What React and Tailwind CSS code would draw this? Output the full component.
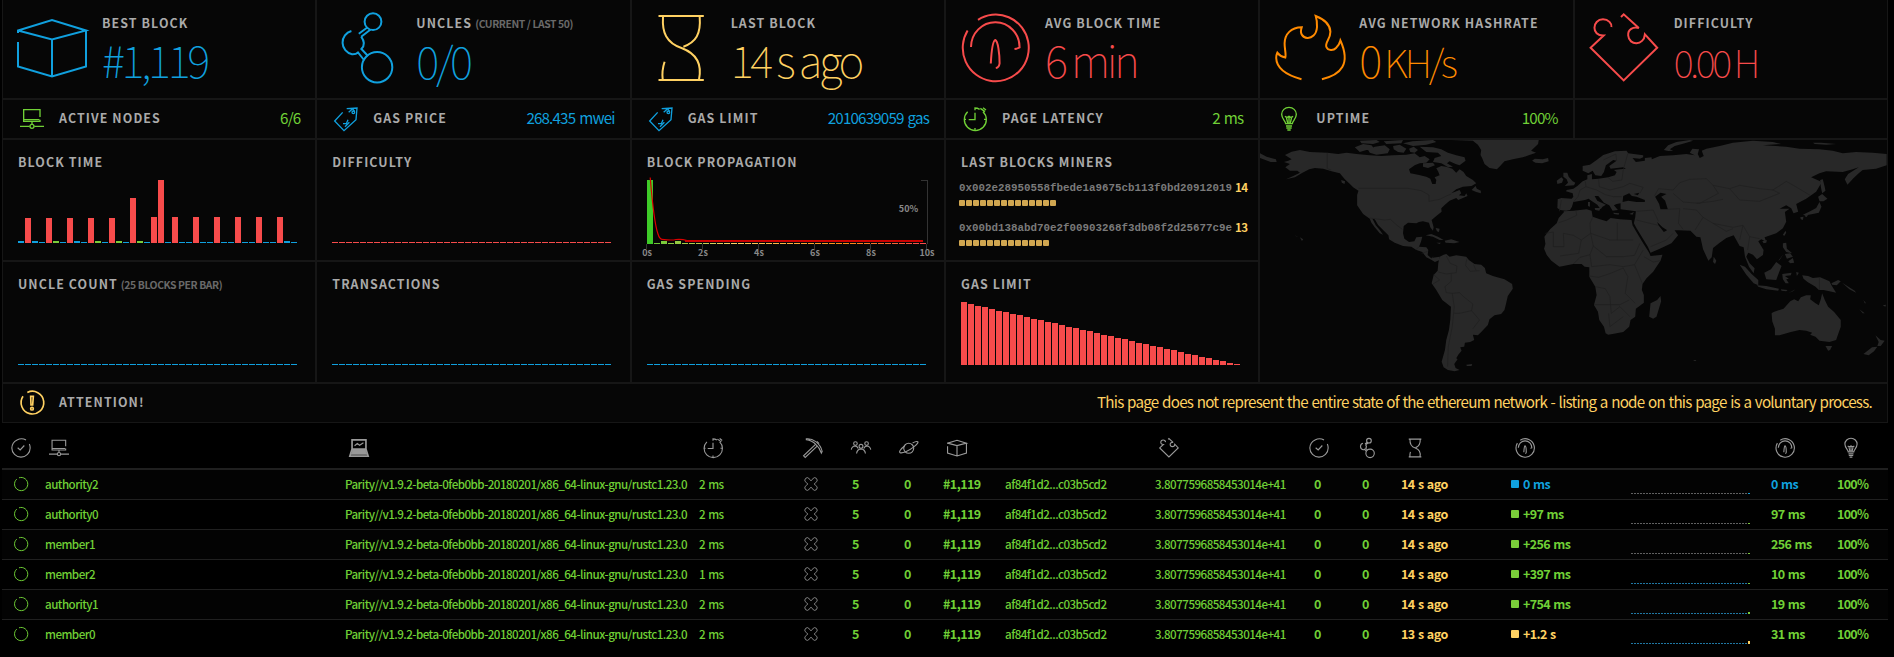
import React from "react";

const BLUE = "#10a0de";
const GREEN = "#7bcc3a";
const YELLOW = "#ffd162";
const RED = "#f74b4b";

/* ---------- large icons, drawn on a 72 x 72 board ---------- */

const SHAPES = {
  cube: <path d="M2 21V18.5L36 8L70 18.5L36 27.5L2 18.5M2 30V54.5L36 64.5L70 54.5V18.5M36 27.5V64.5" />,
  uncles: (
    <g>
      <circle cx="43" cy="9.7" r="8.4" />
      <path d="M21.4 19A12 12 0 0 0 22 42.3Q26 42.5 28 40.5L34 48M31.2 24.7Q36.5 32 31.4 37L38 44M37.3 15.5L28.8 21.7M40.6 17.5L31.2 24.7" />
      <circle cx="47.1" cy="55.3" r="15.2" />
    </g>
  ),
  hourglass: (
    <path d="M13.5 4H58.8M13.5 68H58.8M18 5C17 20 21 31 37.1 36.3C52 42 57 53 54 67.5M54.7 5C56 22 51 30 38.4 34.7M19.6 49.7C17.5 56 17 62 17.7 67.5" />
  ),
  gauge: (
    <g>
      <path d="M19 7.8A33 33.3 0 1 1 8.6 18.5" />
      <path d="M12 35A24.3 25 0 0 1 60.6 35.5Q59 36.5 55.5 37" />
      <path d="M31.8 51.5C32.3 42 33.5 29 36.3 28C39 29 40.6 42 40.6 51.3Q40 55.5 36.8 56" />
    </g>
  ),
  flame: (
    <path d="M28.5 67.2C13 63 3.5 56 3.2 46Q3.2 43 4.3 40.7Q7 44.5 12.3 45.6C13.3 42 11.5 37 11.6 31.3C11.8 22 18 15.5 28.7 15.3C24 28 43 31 44 15Q44.3 9 42.7 4C49 6.5 57 11 57.4 19.7C57.5 27 51.5 31 53.4 35C55 39 60.5 38.8 63 36Q66.3 33 67.4 28.5C78 52 68 63 48.9 67.2" />
  ),
  puzzle: (
    <path d="M33 5L35.7 2.3L50.8 16C45 14.5 39.7 17.5 40.2 23.5C41 34 56 34 56.9 22.3L69.2 35.7L35.7 68.4L2.6 35.7L15.6 23.5C3 24 4 7.5 15 7.3C20.5 7.3 24 11.5 23.4 15" />
  ),
  check: (
    <g>
      <path d="M54 7.5C35 -4 4 8 3 36A33 33 0 1 0 69 36Q69 28 66 22" />
      <path d="M24 35L33 43L48 27" />
    </g>
  ),
  ring: <path d="M26 4A34 34 0 1 1 14 11" />,
  nodes: (
    <g>
      <path d="M60 30V8H11V38M58 38H11V43H60V38M0 58H29M43 58H72M36 44V51" />
      <circle cx="36" cy="58" r="6" />
    </g>
  ),
  laptop: (
    <g>
      <path d="M11 7H61V40H11ZM11 40L3 65H69L61 40" strokeWidth="6" />
      <path d="M14 42H58L63 58H9Z" fill="currentColor" />
      <path d="M20 28L30 20L38 26L52 17" />
    </g>
  ),
  clock: (
    <g>
      <path d="M14 14A33 33 0 1 0 60 14M34 3Q44 3 50 7M36 3V10M52 4L66 14M60 2L69 9" />
      <path d="M36 17V38H17M3 37H9M63 37H69M36 63V70" />
    </g>
  ),
  pick: (
    <g>
      <path d="M12 3C34 0 62 18 69 48L66 54C60 38 52 28 46 23C38 15 26 8 12 6Z" />
      <path d="M46 22L2 64L8 70L52 28M50 12L58 20" />
    </g>
  ),
  peers: (
    <g>
      <circle cx="16" cy="20" r="6.5" />
      <circle cx="56" cy="20" r="6.5" />
      <circle cx="36" cy="30" r="7" />
      <path d="M1 42Q3 30 15 29Q23 30 26 38M71 42Q69 30 57 29Q49 30 46 38M20 56Q22 40 36 39Q50 40 52 56" />
    </g>
  ),
  planet: (
    <g>
      <circle cx="35" cy="37" r="18" />
      <path d="M20 29C8 38 -2 50 4 53C12 56 34 48 52 33C66 22 72 14 66 13C62 12 56 14 49 18" />
    </g>
  ),
  bulb: (
    <g>
      <path d="M26 50C26 42 14 36 14 22A22 21 0 0 1 58 22C58 36 46 42 46 50ZM27 57H45M28 63H44M31 69H41" />
      <path d="M24 28Q30 34 36 28Q42 34 48 28M28 30L32 48M44 30L40 48M36 30V48" />
    </g>
  ),
  tag: (
    <g>
      <path d="M26 16L2 42L30 71L66 38L69 3L38 5M44 16L56 5L62 14" />
      <circle cx="58" cy="16" r="4" />
      <path d="M27 50H37L42 38M33 59L46 46" />
    </g>
  ),
  alert: (
    <g>
      <path d="M22 4.5A34 34 0 1 1 9 16" />
      <path d="M32 16H40L38 42H33Z" />
      <circle cx="36" cy="53" r="4" />
    </g>
  ),
  cross: (
    <path d="M18 3Q24 4 27 11L36 19L45 11Q48 4 54 3Q66 4 68 16Q68 24 60 28L53 36L60 44Q68 48 68 56Q66 68 54 69Q48 68 45 61L36 53L27 61Q24 68 18 69Q6 68 4 56Q4 48 12 44L19 36L12 28Q4 24 4 16Q6 4 18 3Z" />
  ),
};

function Icon({ name, className, stroke = 2 }) {
  return (
    <svg viewBox="0 0 72 72" className={className} fill="none" stroke="currentColor" strokeWidth={stroke} overflow="visible">
      {SHAPES[name]}
    </svg>
  );
}

/* ---------- panels ---------- */

const CELL = "box-border border border-[#161616] bg-[#060606] min-w-0";
const LABEL = "text-[12.4px] leading-4 font-bold tracking-[1.1px] text-[#aaa] whitespace-nowrap";

function Note({ children }) {
  return <span className="ml-[3px] text-[10.4px] font-bold tracking-[-0.42px] text-[#696969]">{children}</span>;
}

function BigStat({ icon, label, note, color, children }) {
  return (
    <div className={`${CELL} border-t-0 flex pl-[13px] pt-3 ${color}`}>
      <Icon name={icon} className="size-[72px] shrink-0" />
      <div className="ml-[14px] mt-[3px] whitespace-nowrap">
        <div className={LABEL}>
          {label}
          {note && <Note>{note}</Note>}
        </div>
        <div className="mt-[3px] text-[44px] leading-[50px] font-thin tracking-[-3.3px]">{children}</div>
      </div>
    </div>
  );
}

function SmallStat({ icon, label, value, color }) {
  return (
    <div className={`${CELL} flex items-center pl-[17px] pr-[14px] ${color}`}>
      <Icon name={icon} className="size-6 shrink-0" stroke={4} />
      <div className={`${LABEL} ml-[15px] pb-0.5`}>{label}</div>
      <div className="ml-auto pb-[5px] pr-px text-[15.2px] leading-5 font-normal tracking-[-0.85px] [word-spacing:1.5px] whitespace-nowrap">{value}</div>
    </div>
  );
}

function Panel({ title, note, children }) {
  return (
    <div className={`${CELL} flex flex-col px-[15px] pt-[14px] pb-[17px]`}>
      <div className={LABEL}>
        {title}
        {note && <Note>{note}</Note>}
      </div>
      {children}
    </div>
  );
}

function Bars({ data }) {
  return (
    <div className="mt-auto flex items-end gap-px">
      {data.map(([h, c], i) => (
        <div key={i} className="w-1.5 shrink-0" style={{ height: h, background: c }} />
      ))}
    </div>
  );
}

const fill = (n, h, c) => Array.from({ length: n }, () => [h, c]);
const B1 = [1, BLUE], B2 = [2, BLUE], G2 = [2, GREEN], R25 = [25, RED], R26 = [26, RED];

const BLOCK_TIME = [
  B2, R25, B2, B1, R25, G2, B1, R25, B2, B1, R25, G2, B1, R25, G2, B1, [45, RED], G2, B1, R26,
  [63, RED], B1, R26, B1, B1, R26, B1, B1, R26, B1, B1, R26, B1, B1, R26, B1, B1, R26, B2, B1,
];

const GAS_LIMIT = [
  63, 61, 59, 58, 56, 54, 53, 51, 50, 48, 46, 45, 43, 42, 40, 38, 37, 35, 34, 32,
  30, 29, 27, 26, 24, 22, 21, 19, 18, 16, 15, 13, 11, 10, 8, 7, 5, 4, 2, 1,
].map((h) => [h, RED]);

function mix(a, b, t) {
  return `rgb(${a.map((v, i) => Math.round(v + (b[i] - v) * t)).join(",")})`;
}

function propagationColor(i) {
  const g = [96, 200, 50], y = [255, 209, 98], o = [255, 138, 20], r = [247, 75, 75];
  if (i < 12) return mix(g, y, i / 12);
  if (i < 28) return mix(y, o, (i - 12) / 16);
  return mix(o, r, (i - 28) / 11);
}

function Propagation() {
  return (
    <svg width="296" height="88" viewBox="0 0 296 88" className="mt-[3px] shrink-0 overflow-visible" shapeRendering="auto">
      <g fill="none" stroke="#333" shapeRendering="crispEdges">
        {[0, 56, 112, 168, 224, 280].map((x) => (
          <path key={x} d={`M${x - 0.5} 71V76`} />
        ))}
        <path d="M274 7.5H280.5V71" />
      </g>
      {Array.from({ length: 40 }, (_, i) => {
        const h = i === 0 ? 64 : i === 2 || i === 4 ? 3 : 1;
        return <rect key={i} x={i * 7} y={71 - h} width="6" height={h} fill={i === 0 ? "#3ecb28" : propagationColor(i)} />;
      })}
      <path d="M3.2 4.5C4.5 20 7 50 11 61Q12.5 66 15 66.3C20 67 25 67.5 29 66.5Q35 66 40 67.5H276" fill="none" stroke="#d00" strokeWidth="1.2" />
      <path d="M38 68H276" stroke="#c00" strokeWidth="2" />
      <g fill="#888" fontSize="9" fontWeight="700" textAnchor="middle">
        {["0s", "2s", "4s", "6s", "8s", "10s"].map((t, i) => (
          <text key={t} x={i * 56} y="83">{t}</text>
        ))}
        <text x="261.500" y="38.500">50%</text>
      </g>
    </svg>
  );
}

function Miner({ hash, count }) {
  return (
    <div className="h-10">
      <div className="flex items-center h-4">
        <span className="font-['Liberation_Mono',monospace] text-[10.84px] font-bold text-[#7a7a7a]">{hash}</span>
        <span className="ml-[3px] pb-0.5 text-[11.5px] leading-4 font-bold tracking-[-0.5px] text-[#ffd162]">{count}</span>
      </div>
      <div className="mt-[4px] flex gap-px">
        {Array.from({ length: count }, (_, i) => (
          <div key={i} className="size-1.5 rounded-[1px] bg-[#d0a650]" />
        ))}
      </div>
    </div>
  );
}

/* ---------- world map: two halves of 942 units each ---------- */

function WorldMap() {
  return (
    <svg viewBox="0 0 1884 726" preserveAspectRatio="none" className="block w-full h-full">
      <g fill="#282828">
        <path d="M75 45L95 35L120 30L150 36L202 38L235 42L260 38L290 42L330 46L365 48L400 46L440 44L465 40L480 52L495 48L510 58L500 68L480 70L465 76L448 88L452 100L475 104L500 110L512 116L518 132L528 132L530 120L525 112L540 106L536 95L530 85L545 78L560 80L578 86L590 98L600 88L612 96L620 108L640 120L650 130L636 138L610 140L590 148L575 160L600 150L605 160L598 166L615 168L620 160L624 168L596 180L590 174L570 182L556 194L545 205L546 215L530 228L516 240L522 262L520 272L512 262L508 248L490 244L478 246L470 250L445 248L432 258L430 280L434 296L448 306L464 304L470 292L488 290L484 305L478 320L500 322L506 330L504 345L514 354L530 352L540 350L540 360L526 366L512 358L500 352L488 336L470 330L455 320L430 318L405 308L388 298L386 286L370 270L355 255L345 238L338 236L348 256L360 270L370 284L360 280L345 262L335 248L330 236L310 222L292 196L292 165L296 152L280 142L268 130L255 118L240 100L215 94L190 86L165 84L148 88L125 100L105 112L78 118L100 108L120 98L112 92L90 92L76 82L90 72L72 66L85 62L95 58Z" />
        <path d="M0 40L20 50L48 58L50 66L32 66L0 54ZM285 22L310 12L335 16L345 28L320 30L300 36ZM325 30L345 20L375 16L390 28L384 40L350 44L330 38ZM300 2L350 0L360 6L340 12L305 10ZM372 4L430 0L425 10L380 12ZM400 18L420 14L440 26L432 38L415 36L402 28ZM430 10L458 4L520 0L530 6L500 14L460 18ZM448 26L462 20L475 30L465 38L452 36ZM480 20L520 22L545 28L565 38L590 46L615 52L618 62L600 76L588 72L570 64L562 70L580 80L566 82L545 70L520 66L525 54L545 48L535 38L500 36ZM490 70L520 68L526 76L505 84L490 80Z" />
        <path d="M575 0L640 2L655 14L665 30L663 45L668 55L675 72L690 84L712 88L722 78L735 64L760 58L790 52L810 45L830 38L815 32L836 12L838 0ZM818 62L826 56L850 58L866 54L868 64L848 70L828 68ZM636 150L648 138L652 146L664 152L664 160L650 156ZM498 286L515 282L535 290L552 300L540 300L520 290ZM555 302L575 298L600 306L584 310L558 308ZM530 308L544 308L540 312ZM528 264L540 266L538 276L532 274ZM620 674L638 672L636 678L622 678ZM120 292L130 298L126 303ZM104 286L116 292L108 289ZM244 120L256 124L254 132L246 128Z" />
        <path d="M540 350L552 344L560 342L570 350L590 346L620 350L628 360L645 372L665 374L676 384L680 400L700 408L735 418L758 432L760 446L745 468L740 490L735 510L725 522L705 526L690 538L685 555L665 576L655 586L640 584L644 600L632 606L616 608L614 620L602 622L606 632L596 644L590 655L594 658L584 672L588 684L600 690L585 694L565 690L552 682L546 665L556 630L560 600L568 570L572 540L574 500L548 480L530 450L516 430L522 405L534 392L536 370Z" />
      </g>
      <g transform="translate(942 0)">
        <g fill="#282828">
          <path d="M-30 214L0 212L40 208L55 212L58 230L80 238L100 244L112 234L140 238L175 240L178 256L195 285L210 310L228 338L232 348L268 344L262 362L240 395L220 415L208 432L206 450L212 465L212 488L188 506L186 530L172 540L168 560L150 576L130 580L105 584L97 580L92 560L78 540L74 515L62 495L70 465L66 440L48 410L48 382L34 380L25 372L0 372L-30 378L-42 380L-66 362L-80 345L-88 326L-84 312L-87 290L-70 268L-50 250L-44 234L-28 216Z" />
          <path d="M-47 178L-36 174L-5 176L0 170L-2 160L-22 154L-20 150L0 146L12 138L28 124L42 118L42 106L56 102L56 118L75 116L105 112L125 106L130 96L122 90L140 88L158 86L150 82L112 86L108 78L130 62L120 60L98 76L92 96L84 108L66 106L58 92L45 100L28 92L28 78L50 74L70 60L90 45L125 34L160 32L165 40L210 46L210 52L200 56L178 54L188 66L215 62L215 54L235 52L236 58L260 48L300 46L340 42L365 46L350 38L358 26L378 28L374 42L380 54L392 48L386 32L400 26L440 18L480 8L540 2L600 6L625 12L570 16L640 20L680 26L740 28L780 32L810 40L850 36L900 38L942 42L942 76L910 86L870 90L858 100L842 115L824 134L816 118L826 102L858 82L840 88L810 96L760 94L740 100L715 112L742 124L745 130L730 155L700 176L670 192L676 215L662 220L655 205L640 196L620 206L650 206L636 216L640 245L630 265L610 280L575 292L580 305L565 298L556 304L572 330L570 345L552 358L540 344L526 338L520 350L530 370L545 385L542 400L528 380L516 350L512 322L500 318L482 286L460 294L440 308L420 324L416 352L406 362L390 328L382 292L370 290L352 272L300 270L285 272L268 262L252 246L256 256L272 276L298 262L315 286L295 310L260 326L232 338L224 320L190 265L182 250L186 232L188 214L160 210L142 208L142 190L130 192L122 196L134 210L118 212L108 196L92 188L75 168L64 168L72 182L98 194L88 200L82 208L72 194L54 182L46 176L35 180L0 186L-4 200L-10 210L-22 212L-40 210L-48 204Z" />
          <path d="M-30 98L-18 98L-14 110L-2 124L6 128L2 136L-26 138L-16 128L-20 118L-30 110ZM-50 122L-36 112L-30 118L-34 128L-48 132ZM44 186L50 186L50 200L44 198ZM64 204L82 204L78 212L66 210ZM120 218L138 220L136 224L122 222ZM168 222L182 216L178 224ZM272 30L285 16L310 6L350 0L360 2L335 10L305 18L290 28L300 32L285 33ZM720 8L745 8L790 12L760 14L726 12Z" />
          <path d="M742 120L750 118L756 142L758 152L748 160L744 140ZM736 170L748 162L764 176L752 184L740 184ZM740 186L746 200L738 218L720 222L700 226L690 224L712 214L730 204ZM682 232L692 230L690 240L684 238ZM694 226L706 226L700 232ZM630 284L638 272L640 278L634 288ZM568 304L582 300L580 308L572 310ZM422 350L430 362L426 372L420 366ZM630 310L640 308L642 326L658 340L640 336L630 322ZM616 362L632 342L620 360ZM636 342L652 340L660 350L642 356ZM646 364L660 354L664 368L652 370ZM500 374L516 380L536 402L556 420L556 436L542 430L520 404ZM552 436L580 438L618 446L616 452L580 448L556 440ZM574 398L594 388L610 366L626 378L618 398L610 420L580 418ZM628 402L656 398L654 406L636 408L648 416L640 418L648 430L638 430L630 418ZM670 396L678 398L672 408ZM688 406L706 408L720 414L742 412L770 424L776 436L790 458L770 454L752 450L738 450L728 440L704 426L692 416ZM624 448L644 450L640 454L626 452ZM648 458L668 448L660 454ZM776 430L796 420L804 424L792 436L778 434ZM808 428L846 452L850 458L830 448ZM872 480L880 490L876 490ZM860 508L876 520L870 520ZM930 496L940 494L938 500Z" />
          <path d="M596 520L602 516L632 506L652 484L664 478L676 484L684 472L700 466L714 466L712 478L728 490L738 496L744 478L748 460L756 480L766 500L784 516L804 540L804 560L790 600L770 606L740 602L728 590L712 584L718 578L700 572L680 570L654 576L620 586L606 586L606 566L598 544ZM758 618L778 618L772 630L766 632ZM908 586L924 600L936 602L924 618L914 618L918 606ZM872 642L898 622L914 620L904 634L888 646ZM262 468L264 484L250 530L240 536L228 530L232 490L252 480ZM360 660L370 660L366 664Z" />
        </g>
        <g fill="#060606">
          <path d="M148 186L150 168L168 160L176 168L190 170L215 180L215 186L190 186L165 182ZM182 162L198 158L194 166ZM246 170L262 158L280 162L264 170L276 182L284 208L262 208L258 192Z" />
        </g>
      </g>
      <g fill="none" stroke="#1e1e1e" strokeWidth="2">
        <path d="M202 38V86L214 90M296 145H445L485 152L508 165L508 184L540 178L560 168L575 162M330 234L375 240L392 238L412 256L428 268M536 396L560 402L575 400V424L556 440L560 458L578 460L600 458L612 470L640 492L636 512L660 540L640 566M578 460L584 500L578 560L566 620L564 680M584 520H600L636 512M560 348L572 370L592 378L590 398L575 400M622 356L618 376L632 394L660 392M642 374L650 392M522 404L540 420L520 432M468 330L478 320M486 340L504 334M514 358L520 350" />
        <path transform="translate(942 0)" d="M-44 248L-20 240L10 226L8 212M-84 280L-60 276L-60 320L-28 320L-30 280L0 286L24 300L52 280L50 250L58 232M52 280L110 300H132V248M132 300H180M24 300L16 340L-20 345L-40 348M52 280L60 318L50 344L20 352L0 372M60 318L100 350L150 350L184 346L200 310M50 344L55 380L110 374L150 380L184 374L210 330M48 408L76 412L112 400L150 384L164 410L156 460L186 490M62 494H140L168 480M66 440L96 446L110 470L114 520L140 500L170 530M106 520L110 560L150 530M184 374L208 432M212 350L240 366L262 362M-42 214L-36 180M0 186L14 170L20 150L38 140L36 124M38 140L70 150L96 164L120 170L146 170M76 118L78 140L110 150L150 140L170 130L210 142L200 160M104 112L118 124L146 120L150 90L164 40M130 62L128 42L90 60M244 168L256 146L300 150L320 128L350 118L400 116L420 136L470 146L500 136L560 146L600 150L640 124L665 138L712 166M470 146L500 180L560 184L620 160L600 150M420 136L436 160L380 190L330 186L300 160M284 208L320 206L316 250L330 268M190 214L240 210L256 244M190 240L230 250L256 256M232 320L280 300L300 280M330 206L370 210L390 232L366 270M390 232L420 250L480 262L510 256L500 300M420 250L460 274L480 266M510 256L530 290L560 296M530 290L524 330M740 414V450M370 190L420 184L450 178" />
      </g>
    </svg>
  );
}

/* ---------- node table ---------- */

const GRID =
  "grid grid-cols-[42px_300px_354px_105px_48px_48px_43px_62px_150px_155px_48px_43px_111px_120px_139px_66px_52px] items-center";

const HEAD = [
  ["check", "pl-[9px]"], ["nodes", "pl-[5px]"], ["laptop", "pl-[5px]"], ["clock", "pl-[5px]"], ["pick", ""],
  ["peers", ""], ["planet", ""], ["cube", "pl-[5px]"], [null, ""], ["puzzle", "pl-[5px]"], ["check", ""],
  ["uncles", ""], ["hourglass", "pl-[5px]"], ["gauge", "pl-1"], [null, ""], ["gauge", "pl-[5px]"], ["bulb", "pl-[5px]"],
];

const ROWS = [
  { name: "authority2", ms: "2 ms", ago: "14 s ago", prop: "0 ms", avg: "0 ms", tone: "text-[#10a0de]", avgTone: "text-[#10a0de]", dots: "#606060", end: BLUE, endH: 1 },
  { name: "authority0", ms: "2 ms", ago: "14 s ago", prop: "+97 ms", avg: "97 ms", tone: "", avgTone: "", dots: "#606060", end: GREEN, endH: 1 },
  { name: "member1", ms: "2 ms", ago: "14 s ago", prop: "+256 ms", avg: "256 ms", tone: "", avgTone: "", dots: "#606060", end: GREEN, endH: 1 },
  { name: "member2", ms: "1 ms", ago: "14 s ago", prop: "+397 ms", avg: "10 ms", tone: "", avgTone: "", dots: "#1f77a3", end: GREEN, endH: 1 },
  { name: "authority1", ms: "2 ms", ago: "14 s ago", prop: "+754 ms", avg: "19 ms", tone: "", avgTone: "", dots: "#1f77a3", end: GREEN, endH: 2 },
  { name: "member0", ms: "2 ms", ago: "13 s ago", prop: "+1.2 s", avg: "31 ms", tone: "text-[#ffd162]", avgTone: "", dots: "#1f77a3", end: YELLOW, endH: 3 },
];

const SMALL = "pl-px text-[11.6px] font-medium tracking-[-0.52px]";

function Row({ r, last, odd }) {
  return (
    <div
      className={`${GRID} h-[30px] pb-px text-[12.5px] leading-4 font-bold tracking-[-0.55px] [word-spacing:1px] text-[#70d036] whitespace-nowrap border-b ${
        last ? "border-transparent" : "border-[#202020]"
      } ${odd ? "bg-[#030303]" : ""}`}
    >
      <div className="pl-3"><Icon name="ring" className="size-3.5" stroke={5} /></div>
      <div className={SMALL}>{r.name}</div>
      <div className={SMALL}>Parity//v1.9.2-beta-0feb0bb-20180201/x86_64-linux-gnu/rustc1.23.0</div>
      <div className={SMALL}>{r.ms}</div>
      <div className="pl-px text-[#888]"><Icon name="cross" className="size-3.5" stroke={5} /></div>
      <div className="pl-px">5</div>
      <div className="pl-[5px]">0</div>
      <div className="pl-px">#1,119</div>
      <div className={SMALL}>af84f1d2...c03b5cd2</div>
      <div className={SMALL}>3.8077596858453014e+41</div>
      <div className="pl-[5px]">0</div>
      <div className="pl-[5px]">0</div>
      <div className="pl-px text-[#ffd162]">{r.ago}</div>
      <div className={`flex items-center gap-1 tracking-[-0.6px] ${r.tone}`}>
        <span className={`size-2 rounded-[1px] ${r.tone ? "bg-current" : "bg-[#7bcc3a]"}`} />
        <span>{r.prop}</span>
      </div>
      <div className="flex items-end gap-px self-end pb-1">
        {Array.from({ length: 40 }, (_, i) => (
          <span key={i} className="w-0.5" style={{ height: i === 39 ? r.endH : 1, background: i === 39 ? r.end : r.dots }} />
        ))}
      </div>
      <div className={`pl-px tracking-[-0.6px] ${r.avgTone}`}>{r.avg}</div>
      <div className="pl-px tracking-[-0.7px]">100%</div>
    </div>
  );
}

export default function App() {
  return (
    <div className="w-[1894px] h-[657px] overflow-hidden bg-black pl-0.5 font-['Noto_Sans_CJK_SC','Open_Sans',sans-serif]">
      <div className="grid w-[1886px] grid-cols-6 grid-rows-[99px_40px_122px_122px_40px]">
        <BigStat icon="cube" label="BEST BLOCK" color="text-[#10a0de]">#1,119</BigStat>
        <BigStat icon="uncles" label="UNCLES" note="(CURRENT / LAST 50)" color="text-[#10a0de]">0/0</BigStat>
        <BigStat icon="hourglass" label="LAST BLOCK" color="text-[#ffd162]">14 s ago</BigStat>
        <BigStat icon="gauge" label="AVG BLOCK TIME" color="text-[#f74b4b]">6 min</BigStat>
        <BigStat icon="flame" label="AVG NETWORK HASHRATE" color="text-[#ff8a00]">
          0 <span className="-ml-px text-[39px]">KH/s</span>
        </BigStat>
        <BigStat icon="puzzle" label="DIFFICULTY" color="text-[#f74b4b]">
          <span className="text-[38px]">0.00 H</span>
        </BigStat>

        <SmallStat icon="nodes" label="ACTIVE NODES" value="6/6" color="text-[#70d036]" />
        <SmallStat icon="tag" label="GAS PRICE" value="268.435 mwei" color="text-[#10a0de]" />
        <SmallStat icon="tag" label="GAS LIMIT" value="2010639059 gas" color="text-[#10a0de]" />
        <SmallStat icon="clock" label="PAGE LATENCY" value="2 ms" color="text-[#70d036]" />
        <SmallStat icon="bulb" label="UPTIME" value="100%" color="text-[#70d036]" />
        <div className={CELL} />

        <Panel title="BLOCK TIME"><Bars data={BLOCK_TIME} /></Panel>
        <Panel title="DIFFICULTY"><Bars data={fill(40, 1, RED)} /></Panel>
        <Panel title="BLOCK PROPAGATION"><Propagation /></Panel>
        <Panel title="LAST BLOCKS MINERS">
          <div className="-ml-0.5 mt-2.5">
            <Miner hash="0x002e28950558fbede1a9675cb113f0bd20912019" count={14} />
            <Miner hash="0x00bd138abd70e2f00903268f3db08f2d25677c9e" count={13} />
          </div>
        </Panel>
        <div className={`${CELL} col-span-2 row-span-2`}><WorldMap /></div>

        <Panel title="UNCLE COUNT" note="(25 BLOCKS PER BAR)"><Bars data={fill(40, 1, BLUE)} /></Panel>
        <Panel title="TRANSACTIONS"><Bars data={fill(40, 1, BLUE)} /></Panel>
        <Panel title="GAS SPENDING"><Bars data={fill(40, 1, BLUE)} /></Panel>
        <Panel title="GAS LIMIT"><Bars data={GAS_LIMIT} /></Panel>

        <div className={`${CELL} col-span-6 flex items-center pl-[17px] pr-[15px] text-[#ffd162]`}>
          <Icon name="alert" className="size-6 shrink-0" stroke={5} />
          <div className={`${LABEL} ml-[15px] pb-0.5`}>ATTENTION!</div>
          <div className="ml-auto pb-[5px] text-[15.2px] leading-5 tracking-[-0.76px] [word-spacing:0.9px] whitespace-nowrap">
            This page does not represent the entire state of the ethereum network - listing a node on this page is a voluntary process.
          </div>
        </div>
      </div>

      <div className="w-[1886px]">
        <div className={`${GRID} h-[47px] border-b-2 border-[#1f1f1f] pt-[5px] text-[#999]`}>
          {HEAD.map(([name, pad], i) => (
            <div key={i} className={pad}>{name && <Icon name={name} className="size-5" stroke={4} />}</div>
          ))}
        </div>
        {ROWS.map((r, i) => (
          <Row key={r.name} r={r} odd={i % 2 === 0} last={i === ROWS.length - 1} />
        ))}
      </div>
    </div>
  );
}
